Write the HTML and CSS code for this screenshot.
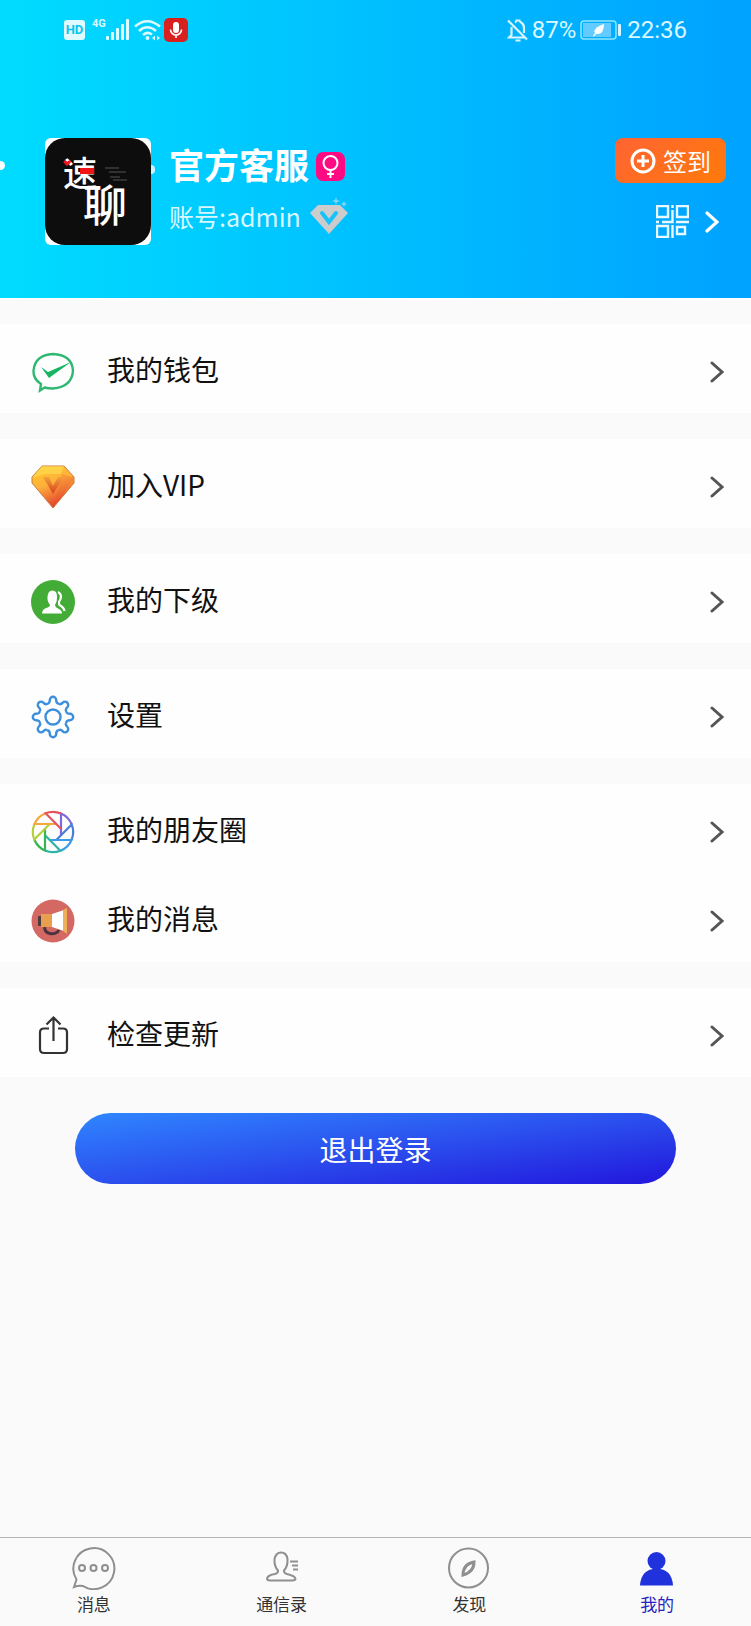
FILE: index.html
```
<!DOCTYPE html>
<html lang="zh-CN">
	<head>
		<meta charset="utf-8" />
		<meta name="viewport" content="width=device-width, initial-scale=1">
		<title>我的</title>
		<link rel="stylesheet" href="styles.css">
	</head>
	<body>
		<header class="header">
			<div class="status">
				<span class="hd">HD</span>
				<span class="net">4G</span>
				<svg class="signal" width="23" height="22" viewBox="0 0 23 22" fill="#e0fbff">
					<rect x="0" y="17" width="3" height="4" rx="1"/>
					<rect x="5" y="13" width="3" height="8" rx="1"/>
					<rect x="10" y="9" width="3" height="12" rx="1"/>
					<rect x="15" y="5" width="3" height="16" rx="1"/>
					<rect x="20" y="0" width="3" height="21" rx="1"/>
				</svg>
				<svg class="wifi" width="27" height="22" viewBox="0 0 27 22" fill="none" stroke="#e0fbff" stroke-width="2.6">
					<path d="M1 7.500Q13 -3 26 7.500M5 12Q13 4.500 22 12M9 16Q13 12 18 15.500"/>
					<circle cx="13.500" cy="19" r="2" fill="#e0fbff" stroke="none"/>
					<path d="M18 19l3-2.500v5zM26 19l-3-2.500v5z" fill="#e0fbff" stroke="none"/>
				</svg>
				<svg class="mic" width="24" height="24" viewBox="0 0 24 24">
					<rect width="24" height="24" rx="5" fill="#d8201f"/>
					<rect x="9" y="4" width="6" height="11" rx="3" fill="#fff"/>
					<path d="M6.500 11.500a5.500 5.500 0 0 0 11 0M12 17v3" fill="none" stroke="#fff" stroke-width="1.600"/>
				</svg>
				<svg class="bell" width="22" height="24" viewBox="0 0 22 24" fill="none" stroke="#d9f5ff" stroke-width="2.200">
					<path d="M8 4.500Q9 4 9.500 2.500h3Q13 4 14 4.500Q17 6 17 10v5M4.500 9v8L2 19.500h15M1 2.500l19 19M8.500 22.500h5"/>
				</svg>
				<span class="percent">87%</span>
				<svg class="battery" width="42" height="20" viewBox="0 0 42 20">
					<rect x="1" y="1" width="35" height="18" rx="3" fill="none" stroke="#8fe6ff" stroke-width="1.500"/>
					<rect x="3" y="3" width="28" height="14" fill="#63cbff"/>
					<path d="M13 16l2-3Q12 8 24 4Q24 15 16 14l-2 2.500z" fill="#fff"/>
					<rect x="38" y="4" width="3" height="12" rx="1" fill="#d9f5ff"/>
				</svg>
				<span>22:36</span>
			</div>

			<div class="profile">
				<div class="avatar">
					<svg width="106" height="107" viewBox="0 0 106 107">
						<rect width="106" height="107" rx="20" fill="#0d0d0d"/>
						<text x="18" y="48" class="logo-a">速</text>
						<text x="38" y="84" class="logo-b">聊</text>
						<path d="M22 28q-6-5-2-5.500q2 0 2 1.500q1-2 3-1.500q3 1-3 5.500z" fill="#f0141e"/>
						<rect x="35" y="30" width="14" height="6" fill="#f01414"/>
						<path d="M60 30h14M64 34h17M65 39h10M68 42h14" stroke="#555"/>
					</svg>
				</div>
				<div class="who">
					<h1 class="name">官方客服
						<svg width="29" height="29" viewBox="0 0 29 29">
							<rect width="29" height="29" rx="7" fill="#ff0a83"/>
							<g fill="none" stroke="#fff" stroke-width="2"><circle cx="14.500" cy="11" r="7"/><path d="M14.500 18v8M11 22h7"/></g>
						</svg>
					</h1>
					<p class="account">账号:admin
						<svg width="38" height="38" viewBox="0 0 38 38">
							<path d="M8 8h22l8 8-19 21L0 16z" fill="#ccc"/>
							<path d="M12 16l7 9 7-9" fill="none" stroke="#14c3fa" stroke-width="4" stroke-linecap="round"/>
							<path d="M26 0l1 3 3 1-3 1-1 3-1-3-3-1 3-1zM34 4l1 2 2 1-2 1-1 2-1-2-2-1 2-1z" fill="#7cd8f6"/>
						</svg>
					</p>
				</div>
				<div class="side">
					<button type="button" class="sign">
						<svg width="26" height="26" viewBox="0 0 26 26" fill="none" stroke="#fff" stroke-width="3"><circle cx="13" cy="13" r="11"/><path d="M13 7v12M7 13h12"/></svg>
						签到
					</button>
					<a href="#" class="code" aria-label="二维码">
						<svg width="33" height="33" viewBox="0 0 33 33" fill="none" stroke="#e8faff" stroke-width="2.400">
							<path d="M1 1h11v11H1zM21 1h11v11H21zM1 21h11v11H1zM21 22h8v7h-8zM16.500 0v3M16.500 5v12H6M0 17h3M20 17h13M16.500 20v13"/>
						</svg>
						<svg width="14" height="22" viewBox="0 0 14 22" fill="none" stroke="#fff" stroke-width="3.200" stroke-linecap="round"><path d="M2 2L12 11L2 20"/></svg>
					</a>
				</div>
			</div>
			<i class="dot dot-left"></i>
			<i class="dot dot-right"></i>
		</header>

		<main class="main">
			<nav class="list">
				<div class="group">
					<a href="#" class="row">
						<svg class="icon" viewBox="0 0 44 44">
							<path d="M10 34Q2 29 2.500 20.500Q4 5 22 4Q41 5 42 20.500Q41 37 22 38.500Q17 38.500 13.500 37.500L9 40.500z" fill="none" stroke="#2fb871" stroke-width="2.400"/>
							<path d="M10 17l7 5L40 12 18 28z" fill="#17b561"/>
						</svg>
						<span>我的钱包</span>
						<svg class="arrow" viewBox="0 0 14 22"><path d="M2 2L12 11L2 20"/></svg>
					</a>
				</div>
				<div class="group">
					<a href="#" class="row">
						<svg class="icon" viewBox="0 0 44 44">
							<defs>
								<linearGradient id="gold" x1="0" y1="0" x2="0.400" y2="1"><stop offset="0" stop-color="#ffc928"/><stop offset="0.500" stop-color="#ffb13b"/><stop offset="1" stop-color="#e5432e"/></linearGradient>
								<linearGradient id="vee" x1="0" y1="0" x2="0" y2="1"><stop offset="0" stop-color="#f2a03c"/><stop offset="1" stop-color="#d8401c"/></linearGradient>
							</defs>
							<path d="M11 1h22l10 11v6L22 43 1 18v-6z" fill="url(#gold)" stroke="#c97b3c"/>
							<path d="M11 1h22l-3 8H14zM14 9L1 13 11 1z" fill="#ffe15a" opacity="0.550"/>
							<path d="M31 9l12 4-21 30z" fill="#e5552e" opacity="0.250"/>
							<path d="M12 12h6l4 9 5-9h6L22 29z" fill="url(#vee)"/>
						</svg>
						<span>加入VIP</span>
						<svg class="arrow" viewBox="0 0 14 22"><path d="M2 2L12 11L2 20"/></svg>
					</a>
				</div>
				<div class="group">
					<a href="#" class="row">
						<svg class="icon" viewBox="0 0 44 44">
							<circle cx="22" cy="22" r="22" fill="#43ac36"/>
							<path d="M11 33.500Q11 29.500 15 28Q19 27 19 25Q16 21 16.500 16.500Q17 10.500 21.500 10.500Q26 10.500 26 16.500Q26.500 21 24 25Q24 27 27 28.500Q31 30 31 33.500z" fill="#fff"/>
							<path d="M27 12Q31 14 29.500 19Q27 23 28.500 25Q33 27.500 33.500 31" fill="none" stroke="#fff" stroke-width="2.200"/>
						</svg>
						<span>我的下级</span>
						<svg class="arrow" viewBox="0 0 14 22"><path d="M2 2L12 11L2 20"/></svg>
					</a>
				</div>
				<div class="group">
					<a href="#" class="row">
						<svg class="icon" viewBox="-22 -22 44 44" fill="none" stroke="#3b8fdc" stroke-width="2.400">
							<defs><path id="tooth" d="M13.500 -5Q14 -3.200 17 -3.200A3.200 3.200 0 0 1 17 3.200Q14 3.200 13.500 5L13.080 6"/></defs>
							<use href="#tooth"/>
							<use href="#tooth" transform="rotate(45)"/>
							<use href="#tooth" transform="rotate(90)"/>
							<use href="#tooth" transform="rotate(135)"/>
							<use href="#tooth" transform="rotate(180)"/>
							<use href="#tooth" transform="rotate(225)"/>
							<use href="#tooth" transform="rotate(270)"/>
							<use href="#tooth" transform="rotate(315)"/>
							<circle r="7.500"/>
						</svg>
						<span>设置</span>
						<svg class="arrow" viewBox="0 0 14 22"><path d="M2 2L12 11L2 20"/></svg>
					</a>
				</div>
				<div class="group">
					<a href="#" class="row">
						<svg class="icon" viewBox="-22 -22 44 44" fill="none" stroke-width="2.200">
							<defs><path id="blade" d="M8 3.300V-18.500A20.200 20.200 0 0 1 18.700 -7.500"/></defs>
							<use href="#blade" stroke="#7d68dc"/>
							<use href="#blade" stroke="#4a7cdc" transform="rotate(45)"/>
							<use href="#blade" stroke="#3c9be8" transform="rotate(90)"/>
							<use href="#blade" stroke="#2bb5a6" transform="rotate(135)"/>
							<use href="#blade" stroke="#35b653" transform="rotate(180)"/>
							<use href="#blade" stroke="#b5d03a" transform="rotate(225)"/>
							<use href="#blade" stroke="#f5a83c" transform="rotate(270)"/>
							<use href="#blade" stroke="#e4525e" transform="rotate(315)"/>
						</svg>
						<span>我的朋友圈</span>
						<svg class="arrow" viewBox="0 0 14 22"><path d="M2 2L12 11L2 20"/></svg>
					</a>
					<a href="#" class="row">
						<svg class="icon" viewBox="0 0 44 44">
							<circle cx="22" cy="22" r="21.500" fill="#d46863"/>
							<path d="M14 28a7 5 0 0 0 14 3" fill="none" stroke="#4b3340" stroke-width="3"/>
							<rect x="7" y="17" width="5" height="10" rx="1" fill="#4b3a40"/>
							<rect x="10" y="15" width="11" height="13" fill="#e9a04e"/>
							<path d="M21 15L33 11v21L21 28z" fill="#fff"/>
							<path d="M32 11l4-2v26l-4-3z" fill="#efb05a"/>
						</svg>
						<span>我的消息</span>
						<svg class="arrow" viewBox="0 0 14 22"><path d="M2 2L12 11L2 20"/></svg>
					</a>
				</div>
				<div class="group">
					<a href="#" class="row">
						<svg class="icon" viewBox="0 0 44 44" fill="none" stroke="#333" stroke-width="2.200">
							<path d="M18 14.500h-5q-4 0-4 4V35q0 4 4 4h19q4 0 4-4V18.500q0-4-4-4h-5M22.500 27V4M15.500 10.500l7-7 7 7"/>
						</svg>
						<span>检查更新</span>
						<svg class="arrow" viewBox="0 0 14 22"><path d="M2 2L12 11L2 20"/></svg>
					</a>
				</div>
			</nav>
			<button type="button" class="logout">退出登录</button>
		</main>

		<nav class="tabs">
			<a href="#" class="tab">
				<svg viewBox="0 0 44 44">
					<path d="M2 41l2.500-7.500A20.500 20.500 0 1 1 11 40Q7 39 2 41z"/>
					<circle cx="10" cy="22" r="3"/><circle cx="21.500" cy="22" r="3"/><circle cx="33" cy="22" r="3"/>
				</svg>
				消息
			</a>
			<a href="#" class="tab">
				<svg viewBox="0 0 44 44">
					<path d="M18 24.500Q14 20 14.500 13Q16 6.500 21 6.500Q26.500 6.500 27.500 13Q28 20 24 24.500Q23.500 27 27 28Q35.500 30 35.500 33Q35 34.500 32 34.500H10Q7 34.500 7 32.500Q8 29 15 28Q18.500 27 18 24.500z"/>
					<path d="M30 15.500h8M32 19.500h6M33 23.500h5"/>
				</svg>
				通信录
			</a>
			<a href="#" class="tab">
				<svg viewBox="0 0 44 44">
					<circle cx="21.500" cy="22" r="19.500"/>
					<path d="M27 16Q27 26 16 29Q16 18 27 16z" stroke-width="3"/>
				</svg>
				发现
			</a>
			<a href="#" class="tab on">
				<svg viewBox="0 0 44 44">
					<circle cx="21.500" cy="15" r="9"/>
					<path d="M5 39.500Q6 23 21.500 22.500Q37 23 38 39.500z"/>
				</svg>
				我的
			</a>
		</nav>
	</body>
</html>
```

FILE: styles.css
```
*{
	margin:0;
	padding:0;
	box-sizing:border-box;
}
body{
	min-height:100vh;
	display:flex;
	flex-direction:column;
	background:#fafafa;
	color:#111;
	font-family:"Noto Sans CJK SC",sans-serif;
	font-size:28px;
}
a{
	color:inherit;
	text-decoration:none;
}
button{
	border:0;
	color:#fff;
	font-family:inherit;
	cursor:pointer;
}
svg{
	flex:none;
}

/* 顶部 */
.header{
	position:relative;
	background:linear-gradient(to right,#00dcff,#00bfff 50%,#00a2ff);
	border-bottom:2px solid #fff;
	color:#fff;
}
.status{
	height:60px;
	padding:0 64px;
	display:flex;
	align-items:center;
	color:#dcf8ff;
	font-family:Roboto,sans-serif;
	font-size:24px;
}
.hd{
	width:21px;
	height:20px;
	border-radius:3px;
	background:#e0fbff;
	color:#0bc4f0;
	font-size:13px;
	font-weight:bold;
	line-height:20px;
	text-align:center;
}
.net{
	margin-left:7px;
	align-self:flex-start;
	padding-top:16px;
	font-size:11px;
	font-weight:bold;
	line-height:16px;
}
.wifi{
	margin:0 3px 0 5px;
}
.bell{
	margin-left:auto;
	margin-right:3px;
}
.percent{
	margin-right:4px;
}
.battery{
	margin-right:5px;
}
.profile{
	display:flex;
	align-items:flex-start;
	padding:78px 25px 53px 45px;
}
.avatar{
	width:106px;
	height:107px;
	border-radius:6px;
	background:#fff;
	overflow:hidden;
}
.avatar svg{
	display:block;
}
.logo-a{
	fill:#fff;
	font-size:34px;
	font-weight:500;
}
.logo-b{
	fill:#fff;
	font-size:44px;
	font-weight:500;
}
.who{
	flex:1;
	margin-left:18px;
}
.name{
	display:flex;
	align-items:center;
	gap:7px;
	height:52px;
	font-size:35px;
	line-height:48px;
}
.name svg{
	margin-top:4px;
}
.account{
	display:flex;
	align-items:center;
	gap:9px;
	font-size:25px;
	line-height:52px;
	color:#d8f7ff;
}
.side{
	display:flex;
	flex-direction:column;
	align-items:flex-end;
}
.sign{
	height:45px;
	padding:0 15px;
	display:flex;
	align-items:center;
	gap:7px;
	border-radius:8px;
	background:linear-gradient(135deg,#ff6433,#ff7a0a);
	font-size:24px;
	line-height:40px;
}
.code{
	display:flex;
	align-items:center;
	gap:16px;
	margin-top:22px;
	padding-right:7px;
}
.dot{
	position:absolute;
	height:9px;
	background:#fff;
}
.dot-left{
	left:0;
	top:161px;
	width:5px;
	border-radius:0 5px 5px 0;
}
.dot-right{
	left:151px;
	top:165px;
	width:4px;
	border-radius:0 5px 5px 0;
	opacity:.8;
}

/* 菜单 */
.main{
	flex:1;
}
.list{
	display:flex;
	flex-direction:column;
	gap:26px;
	padding-top:24px;
}
.group{
	background:#fefefe;
}
.row{
	height:89px;
	padding:6px 27px 0 31px;
	display:flex;
	align-items:center;
}
.row span{
	flex:1;
	margin-left:32px;
	padding-bottom:5px;
}
.icon{
	width:44px;
	height:44px;
}
.arrow{
	width:14px;
	height:22px;
	fill:none;
	stroke:#555;
	stroke-width:3;
	stroke-linecap:round;
}
.logout{
	display:block;
	width:80%;
	height:71px;
	margin:36px auto;
	border-radius:36px;
	background:linear-gradient(to bottom right,#2f86ff,#2b50ee 50%,#2216dc);
	font-size:28px;
}

/* 底部 */
.tabs{
	display:flex;
	border-top:1px solid #b4b4b4;
	padding:8px 0;
}
.tab{
	flex:1;
	display:flex;
	flex-direction:column;
	align-items:center;
	color:#333;
	font-size:17px;
	line-height:28px;
}
.tab svg{
	width:44px;
	height:44px;
	fill:none;
	stroke:#8f8f8f;
	stroke-width:2;
}
.on{
	color:#2a1fc0;
}
.on svg{
	fill:#1f32dc;
	stroke:none;
}
```
